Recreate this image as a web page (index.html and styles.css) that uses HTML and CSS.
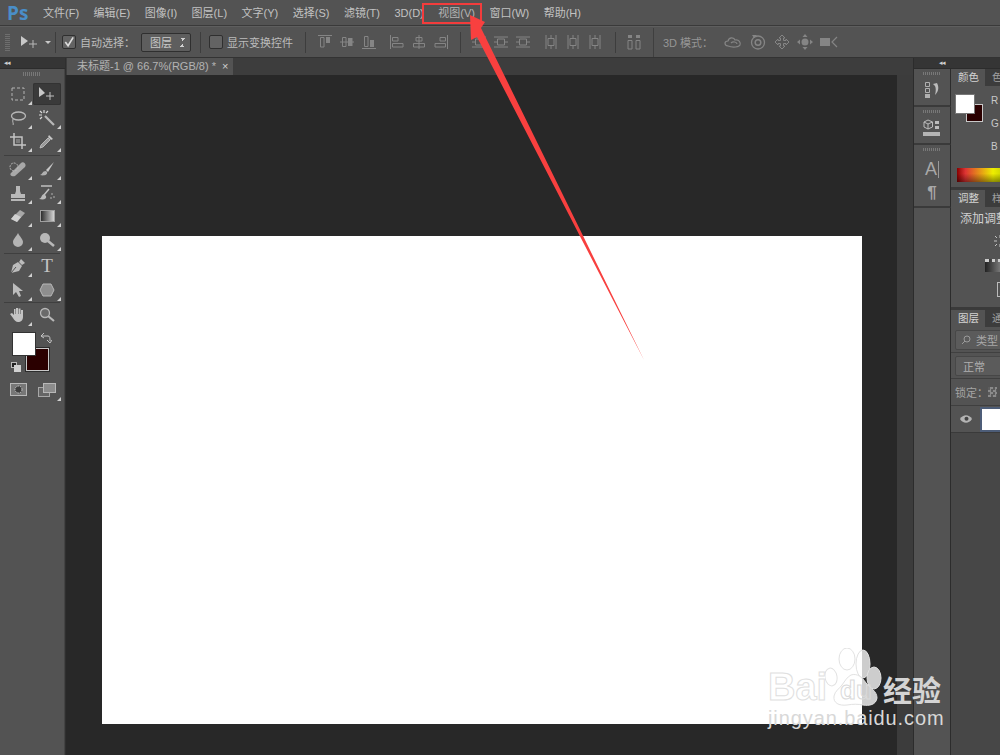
FILE: index.html
```html
<!DOCTYPE html>
<html lang="zh-CN">

<head>
    <meta charset="UTF-8">
    <title>Photoshop</title>
    <link rel="stylesheet" href="styles.css">
</head>

<body>
    <svg class="defs" width="0" height="0">
        <symbol id="corner" viewBox="0 0 4 4"><path d="M4 0V4H0Z" fill="#d0d0d0"/></symbol>
        <symbol id="alignv" viewBox="0 0 16 16"><path d="M1 1.500H15M3.500 3.500H7V13H3.500Z" fill="none" stroke="#858585"/><path d="M9 3H13V9H9Z" fill="#858585"/></symbol>
        <symbol id="alignm" viewBox="0 0 16 16"><path d="M1 8H15M3.500 3.500H7V12.500H3.500Z" fill="none" stroke="#858585"/><path d="M9 4H13.500V12H9Z" fill="#858585"/></symbol>
        <symbol id="alignb" viewBox="0 0 16 16"><path d="M1 14.500H15M3.500 2.500H7V12.500H3.500Z" fill="none" stroke="#858585"/><path d="M9 6H13V13H9Z" fill="#858585"/></symbol>
        <symbol id="alignl" viewBox="0 0 16 16"><path d="M1.500 1V15M3.500 3.500H9V7H3.500ZM3.500 9.500H14V13H3.500Z" fill="none" stroke="#858585"/></symbol>
        <symbol id="alignc" viewBox="0 0 16 16"><path d="M8 1V15M5 3.500H11V7H5ZM2.500 9.500H13.500V13H2.500Z" fill="none" stroke="#858585"/></symbol>
        <symbol id="alignr" viewBox="0 0 16 16"><path d="M14.500 1V15M7 3.500H12.500V7H7ZM2 9.500H12.500V13H2Z" fill="none" stroke="#858585"/></symbol>
        <symbol id="disth" viewBox="0 0 16 16"><path d="M1 3H15M1 8H15M1 13H15" stroke="#858585"/><path d="M4.500 5H11.500V11H4.500Z" fill="#535353" stroke="#858585"/></symbol>
        <symbol id="distv" viewBox="0 0 16 16"><path d="M3 1V15M8 1V15M13 1V15" stroke="#858585"/><path d="M5 4.500H11V11.500H5Z" fill="#535353" stroke="#858585"/></symbol>
        <symbol id="autoalign" viewBox="0 0 16 16"><path d="M2 6.500H6V15H2ZM10 6.500H14V15H10Z" fill="none" stroke="#858585"/><path d="M2 1H6V4H2ZM10 1H14V4H10Z" fill="#858585"/></symbol>
        <linearGradient id="pawfill" gradientUnits="userSpaceOnUse" x1="0" y1="0" x2="60" y2="0">
            <stop offset="0.617" stop-color="#fff"/>
            <stop offset="0.617" stop-color="#cdcdcd"/>
        </linearGradient>
    </svg>

    <div class="app">
        <header class="menubar">
            <span class="ps-logo">Ps</span>
            <nav class="menu">
                <a>文件(F)</a>
                <a>编辑(E)</a>
                <a>图像(I)</a>
                <a>图层(L)</a>
                <a>文字(Y)</a>
                <a>选择(S)</a>
                <a>滤镜(T)</a>
                <a>3D(D)</a>
                <a class="open">视图(V)</a>
                <a>窗口(W)</a>
                <a>帮助(H)</a>
            </nav>
        </header>

        <div class="options">
            <div class="grip-v"></div>
            <div class="opt-tool">
                <svg width="20" height="14" viewBox="0 0 20 14"><path d="M1 1L8 6L1 11Z" fill="#c8c8c8"/><path d="M13 5V13M9 9H17" stroke="#b8b8b8"/></svg>
                <i class="caret"></i>
            </div>
            <div class="opt-sep"></div>
            <label class="check on">
                <svg width="13" height="13" viewBox="0 0 13 13"><path d="M2.500 6L5.500 10L11 1" fill="none" stroke="#dcdcdc" stroke-width="1.800"/></svg>
            </label>
            <span class="opt-text">自动选择：</span>
            <div class="select">图层<i class="updown"></i></div>
            <div class="opt-sep s1"></div>
            <label class="check"></label>
            <span class="opt-text">显示变换控件</span>
            <div class="opt-sep s2"></div>
            <div class="align-group">
                <svg><use href="#alignv"/></svg>
                <svg><use href="#alignm"/></svg>
                <svg><use href="#alignb"/></svg>
                <svg class="gap"><use href="#alignl"/></svg>
                <svg><use href="#alignc"/></svg>
                <svg><use href="#alignr"/></svg>
            </div>
            <div class="opt-sep s3"></div>
            <div class="align-group">
                <svg><use href="#disth"/></svg>
                <svg><use href="#disth"/></svg>
                <svg><use href="#disth"/></svg>
                <svg class="gap"><use href="#distv"/></svg>
                <svg><use href="#distv"/></svg>
                <svg><use href="#distv"/></svg>
            </div>
            <div class="opt-sep s4"></div>
            <svg class="auto" width="16" height="16"><use href="#autoalign"/></svg>
            <div class="opt-sep s5"></div>
            <span class="opt-text mode">3D 模式：</span>
            <div class="mode-icons">
                <svg width="18" height="14" viewBox="0 0 18 14"><path d="M4 11C0 10 0 6 4 6C5 2 10 2 11 5C15 4 17 8 16 10C15 12 9 13 4 11Z M7 8C9 6 13 7 13 9" fill="none" stroke="#858585" stroke-width="1.200"/></svg>
                <svg width="18" height="16" viewBox="0 0 18 16"><circle cx="9" cy="8.500" r="6.500" fill="none" stroke="#858585" stroke-width="1.300"/><circle cx="9" cy="8.500" r="2.800" fill="none" stroke="#858585" stroke-width="1.500"/><path d="M3 1L8 1L5 4Z" fill="#858585"/></svg>
                <svg width="16" height="16" viewBox="0 0 16 16"><path d="M8 1L11 4H9.500V6.500H12V5L15 8L12 11V9.500H9.500V12H11L8 15L5 12H6.500V9.500H4V11L1 8L4 5V6.500H6.500V4H5Z" fill="none" stroke="#858585"/></svg>
                <svg width="16" height="16" viewBox="0 0 16 16"><path d="M8 0L10.500 3H5.500ZM8 16L5.500 13H10.500ZM0 8L3 5.500V10.500ZM16 8L13 10.500V5.500Z" fill="#858585"/><circle cx="8" cy="8" r="3.500" fill="#858585"/></svg>
                <svg width="18" height="12" viewBox="0 0 18 12"><path d="M0 2H10V10H0Z" fill="#858585"/><path d="M17 1L12 6L17 11" fill="none" stroke="#858585" stroke-width="1.200"/></svg>
            </div>
        </div>

        <div class="workarea">
            <aside class="toolbar">
                <div class="collapse-strip"><span class="collapse">◂◂</span></div>
                <div class="tools">
                    <div class="grip-h"></div>
                    <div class="tool-row">
                        <div class="tool"><svg width="16" height="16" viewBox="0 0 16 16"><rect x="2" y="2" width="12" height="12" fill="none" stroke="#b4b4b4" stroke-dasharray="3 2"/></svg><svg class="more"><use href="#corner"/></svg></div>
                        <div class="tool active"><svg width="18" height="14" viewBox="0 0 18 14"><path d="M1 0L1 10L7 6Z" fill="#c8c8c8"/><path d="M12 5V13M8 9H16" stroke="#c0c0c0"/></svg></div>
                    </div>
                    <div class="tool-row">
                        <div class="tool"><svg width="18" height="16" viewBox="0 0 18 16"><ellipse cx="9.500" cy="6" rx="7" ry="4" fill="none" stroke="#b8b8b8" stroke-width="1.300"/><path d="M4 9C3 12 5 14 4 15" fill="none" stroke="#b8b8b8"/></svg><svg class="more"><use href="#corner"/></svg></div>
                        <div class="tool"><svg width="18" height="18" viewBox="0 0 18 18"><path d="M7 7L16 16" stroke="#b8b8b8" stroke-width="2.200"/><path d="M6 1V4M1 6H4M2 2L4 4M10 2L8 4M2 10L4 8" stroke="#d8d8d8" stroke-width="1.200"/></svg><svg class="more"><use href="#corner"/></svg></div>
                    </div>
                    <div class="tool-row">
                        <div class="tool"><svg width="16" height="16" viewBox="0 0 16 16"><path d="M4 0V12H16M0 4H12V16" fill="none" stroke="#c4c4c4" stroke-width="1.500"/><path d="M6 6H10V10H6Z" fill="#7c7c7c"/></svg><svg class="more"><use href="#corner"/></svg></div>
                        <div class="tool"><svg width="16" height="16" viewBox="0 0 16 16"><path d="M10 2L14 6L12 7L9 4Z" fill="#c8c8c8"/><path d="M9 5L11 7L4 14L1 15L2 12Z" fill="#9a9a9a" stroke="#c8c8c8" stroke-width="0.800"/></svg><svg class="more"><use href="#corner"/></svg></div>
                    </div>
                    <div class="tool-sep"></div>
                    <div class="tool-row">
                        <div class="tool"><svg width="18" height="16" viewBox="0 0 18 16"><path d="M2 12L12 2C14 0 18 3 16 6L6 15C3 16 0 14 2 12Z" fill="#a8a8a8"/><circle cx="5" cy="6" r="4" fill="none" stroke="#b8b8b8" stroke-dasharray="2 1"/></svg><svg class="more"><use href="#corner"/></svg></div>
                        <div class="tool"><svg width="16" height="16" viewBox="0 0 16 16"><path d="M15 1L7 9L9 11Z" fill="#c8c8c8"/><path d="M7 10C3 10 4 13 1 14C5 15 9 14 8 11Z" fill="#b0b0b0"/></svg><svg class="more"><use href="#corner"/></svg></div>
                    </div>
                    <div class="tool-row">
                        <div class="tool"><svg width="16" height="16" viewBox="0 0 16 16"><path d="M6 1H10V6L11 9H15V13H1V9H5L6 6ZM1 14H15V16H1Z" fill="#b8b8b8"/></svg><svg class="more"><use href="#corner"/></svg></div>
                        <div class="tool"><svg width="18" height="16" viewBox="0 0 18 16"><path d="M3 1H14M11 4L6 10" stroke="#c0c0c0" stroke-width="1.500"/><path d="M6 9C3 10 4 13 1 14C6 15 9 14 8 11Z" fill="#bbb"/><path d="M14 8V10M16 11V13M13 12V14" stroke="#b0b0b0"/></svg><svg class="more"><use href="#corner"/></svg></div>
                    </div>
                    <div class="tool-row">
                        <div class="tool"><svg width="16" height="14" viewBox="0 0 16 14"><path d="M10 1L15 4L7 13L1 10Z" fill="#a8a8a8"/><path d="M5 5L11 8L7 13L1 10Z" fill="#d0d0d0"/></svg><svg class="more"><use href="#corner"/></svg></div>
                        <div class="tool"><div class="gradient"></div><svg class="more"><use href="#corner"/></svg></div>
                    </div>
                    <div class="tool-row">
                        <div class="tool"><svg width="12" height="14" viewBox="0 0 12 14"><path d="M6 0C8 4 11 6 11 9A5 5 0 0 1 1 9C1 6 4 4 6 0Z" fill="#b4b4b4"/></svg><svg class="more"><use href="#corner"/></svg></div>
                        <div class="tool"><svg width="16" height="16" viewBox="0 0 16 16"><circle cx="6" cy="6" r="5" fill="#b8b8b8"/><path d="M9 9L15 14" stroke="#b8b8b8" stroke-width="2.500"/></svg><svg class="more"><use href="#corner"/></svg></div>
                    </div>
                    <div class="tool-sep thin"></div>
                    <div class="tool-row">
                        <div class="tool"><svg width="16" height="16" viewBox="0 0 16 16"><path d="M11 1L15 5L12 7L9 4ZM8 4L12 8L9 13L1 15L3 7Z" fill="#bcbcbc"/><path d="M1 15L6 9" stroke="#535353"/></svg><svg class="more"><use href="#corner"/></svg></div>
                        <div class="tool"><span class="tool-t">T</span></div>
                    </div>
                    <div class="tool-row">
                        <div class="tool"><svg width="12" height="16" viewBox="0 0 12 16"><path d="M1 1V13L4 10L7 15L9 14L7 9H11Z" fill="#bcbcbc"/></svg><svg class="more"><use href="#corner"/></svg></div>
                        <div class="tool"><svg width="16" height="14" viewBox="0 0 16 14"><path d="M4 1H12L15 7L12 13H4L1 7Z" fill="#8e8e8e" stroke="#b8b8b8"/></svg><svg class="more"><use href="#corner"/></svg></div>
                    </div>
                    <div class="tool-sep thin"></div>
                    <div class="tool-row">
                        <div class="tool"><svg width="16" height="16" viewBox="0 0 16 16"><path d="M3 11L0 7L2 6L4 8V2H5.500V7H6V1H8V7H8.500V1.500H10.500V7H11V3H13V10C13 13 11 15 8 15C6 15 4 13 3 11Z" fill="#c4c4c4"/></svg><svg class="more"><use href="#corner"/></svg></div>
                        <div class="tool"><svg width="16" height="16" viewBox="0 0 16 16"><circle cx="6" cy="6" r="4.500" fill="#6a6a6a" stroke="#b8b8b8" stroke-width="1.300"/><path d="M9 9L15 14" stroke="#b8b8b8" stroke-width="2.200"/></svg></div>
                    </div>
                    <div class="swatches">
                        <div class="swatch-bg"></div>
                        <div class="swatch-fg"></div>
                        <svg class="swap" width="12" height="12" viewBox="0 0 12 12"><path d="M1 4H8C10 4 10 6 10 9M1 4L4 1M1 4L4 6M10 11L7 8M10 11L12 8" fill="none" stroke="#c4c4c4"/></svg>
                        <div class="mini-a"></div>
                        <div class="mini-b"></div>
                    </div>
                    <div class="tool-row last">
                        <div class="tool"><svg width="17" height="13" viewBox="0 0 17 13"><rect x="0.500" y="0.500" width="16" height="12" fill="#777" stroke="#b8b8b8"/><circle cx="8.500" cy="6.500" r="3.500" fill="#3e3e3e" stroke="#ccc" stroke-dasharray="1.500 1"/></svg></div>
                        <div class="tool"><svg width="18" height="14" viewBox="0 0 18 14"><rect x="0.500" y="4.500" width="11" height="9" fill="#666" stroke="#a8a8a8"/><rect x="5.500" y="0.500" width="12" height="9" fill="#8c8c8c" stroke="#b8b8b8"/></svg><svg class="more"><use href="#corner"/></svg></div>
                    </div>
                </div>
            </aside>

            <main class="center">
                <div class="tabbar">
                    <div class="doc-tab">未标题-1 @ 66.7%(RGB/8) *<span class="close">×</span></div>
                </div>
                <div class="viewport">
                    <div class="canvas-area">
                        <div class="paper"></div>
                    </div>
                    <div class="gutter"></div>
                </div>
            </main>

            <aside class="dock">
                <div class="collapse-strip right"><span class="collapse">◂◂</span></div>
                <div class="dock-group g1">
                    <div class="grip-h small"></div>
                    <svg width="16" height="18" viewBox="0 0 16 18"><path d="M1.500 1.500H5.500V5.500H1.500ZM1.500 7.500H5.500V11.500H1.500Z" fill="none" stroke="#b0b0b0"/><path d="M1 13H6V17H1Z" fill="#b0b0b0"/><path d="M9 3L13 2C15 6 15 10 11 14C12 10 12 7 11 5Z" fill="#bcbcbc"/></svg>
                </div>
                <div class="dock-group g2">
                    <div class="grip-h small"></div>
                    <svg width="18" height="18" viewBox="0 0 18 18"><path d="M5 1L9.500 3V8L5 10L1 8V3Z" fill="none" stroke="#bcbcbc"/><path d="M1 3L5 5L9.500 3M5 5V10" fill="none" stroke="#bcbcbc"/><path d="M12 2H16V5H12ZM12 7H16V10H12Z" fill="#bcbcbc"/><path d="M0 13H17V17H0Z" fill="#b4b4b4"/></svg>
                </div>
                <div class="dock-group g3">
                    <div class="grip-h small"></div>
                    <span class="dock-a">A<b></b></span>
                    <span class="dock-p">¶</span>
                </div>
                <div class="dock-group rest"></div>
            </aside>

            <aside class="panels">
                <div class="collapse-strip"></div>
                <section class="panel p-color">
                    <div class="panel-tabs"><span class="ptab on">颜色</span><span class="ptab">色</span></div>
                    <div class="color-body">
                        <div class="c-swatch-bg"></div>
                        <div class="c-swatch-fg"></div>
                        <span class="c-label r">R</span>
                        <span class="c-label g">G</span>
                        <span class="c-label b">B</span>
                        <div class="spectrum"></div>
                    </div>
                </section>
                <section class="panel p-adjust">
                    <div class="panel-tabs"><span class="ptab on">调整</span><span class="ptab">样</span></div>
                    <div class="adjust-title">添加调整</div>
                    <svg class="adj-sun" width="8" height="14" viewBox="0 0 8 14"><path d="M7 1V4M7 10V13M1 7H4M2 2L4 4M2 12L4 10" stroke="#c4c4c4"/></svg>
                    <div class="adj-levels"></div>
                    <div class="adj-box"></div>
                </section>
                <section class="panel p-layers">
                    <div class="panel-tabs"><span class="ptab on">图层</span><span class="ptab">通</span></div>
                    <div class="layer-row filter">
                        <div class="field"><svg width="10" height="10" viewBox="0 0 10 10"><circle cx="6" cy="4" r="3" fill="none" stroke="#9a9a9a"/><path d="M4 6L1 9" stroke="#9a9a9a"/></svg>类型</div>
                    </div>
                    <div class="layer-row blend">
                        <div class="field">正常</div>
                    </div>
                    <div class="layer-row lock">
                        <span>锁定：</span><i class="checker"></i>
                    </div>
                    <div class="layer-item">
                        <svg width="12" height="8" viewBox="0 0 12 8"><path d="M0 4C3 -1 9 -1 12 4C9 9 3 9 0 4Z" fill="#b4b4b4"/><circle cx="6.500" cy="3.800" r="2" fill="#444"/></svg>
                        <div class="thumb"></div>
                    </div>
                    <div class="layer-empty"></div>
                </section>
            </aside>
        </div>

        <!-- annotation added over the screenshot -->
        <div class="callout"></div>
        <svg class="arrow" width="1000" height="755" viewBox="0 0 1000 755"><path d="M470 15L485 22L481 28L644 360L477 37L471 40Z" fill="#f8403f"/></svg>

        <div class="watermark">
            <svg class="paw" width="60" height="60" viewBox="0 0 60 60">
                <g fill="url(#pawfill)" stroke="#e2e2e2">
                    <ellipse cx="6" cy="29" rx="6" ry="9" transform="rotate(-10 6 29)"/>
                    <ellipse cx="22" cy="11" rx="8" ry="11"/>
                    <ellipse cx="38" cy="16" rx="7" ry="14"/>
                    <ellipse cx="49" cy="30" rx="7" ry="11"/>
                    <path d="M26 27C32 25 37 29 41 35C45 40 52 43 52 50C51 57 44 58 38 57C33 56 28 56 22 57C14 58 8 55 9 48C10 43 14 41 17 37C20 33 22 29 26 27Z"/>
                </g>
            </svg>
            <span class="wm-bai">Bai</span>
            <span class="wm-du">du</span>
            <span class="wm-jy">经验</span>
            <span class="wm-url">jingyan.baidu.com</span>
        </div>
    </div>
</body>

</html>
```
FILE: styles.css
```css
:root {
    --panel: #535353;
    --panel-dark: #474747;
    --line: #2f2f2f;
    --text: #c2c2c2;
    --font: "Liberation Sans", "Noto Sans CJK SC", sans-serif;
}

* {
    box-sizing: border-box;
}

body {
    margin: 0;
    background: var(--panel);
    font-family: var(--font);
    font-size: 11px;
    color: var(--text);
    overflow: hidden;
}

.defs {
    position: absolute;
}

.app {
    position: relative;
    width: 1000px;
    height: 755px;
    display: flex;
    flex-direction: column;
    overflow: hidden;
}

/* menu */
.menubar {
    height: 26px;
    display: flex;
    align-items: center;
    border-bottom: 1px solid #3a3a3a;
    background: #535353;
}

.ps-logo {
    width: 43px;
    padding-left: 7px;
    font: bold 19px "Open Sans", sans-serif;
    color: #4a8ec8;
}

.menu {
    display: flex;
    gap: 14.500px;
}

.menu a {
    line-height: 20px;
    white-space: nowrap;
}

.menu a.open {
    color: #b4b4b4;
}

/* options bar */
.options {
    height: 32px;
    display: flex;
    align-items: center;
    background: #535353;
    border-top: 1px solid #5e5e5e;
    border-bottom: 1px solid #333;
    color: #bcbcbc;
}

.grip-v {
    width: 5px;
    height: 17px;
    margin-left: 5px;
    background: repeating-linear-gradient(#6e6e6e 0 1px, transparent 1px 2px);
}

.opt-tool {
    display: flex;
    align-items: center;
    margin-left: 10px;
    width: 35px;
}

.caret {
    margin-left: 5px;
    border-left: 3px solid transparent;
    border-right: 3px solid transparent;
    border-top: 3px solid #c8c8c8;
}

.opt-sep {
    width: 1px;
    height: 21px;
    margin: 0 6px 0 0;
    background: #3d3d3d;
    flex: none;
}

.check {
    width: 14px;
    height: 14px;
    margin-right: 4px;
    border: 1px solid #2f2f2f;
    border-radius: 2px;
    background: #636363;
    display: flex;
    align-items: center;
    justify-content: center;
}

.opt-text {
    white-space: nowrap;
}

.select {
    width: 50px;
    height: 19px;
    margin-left: 6px;
    padding-left: 8px;
    display: flex;
    align-items: center;
    justify-content: space-between;
    border: 1px solid #2f2f2f;
    border-radius: 2px;
    background: #5e5e5e;
    color: #c8c8c8;
}

.updown {
    width: 5px;
    height: 9px;
    margin-right: 5px;
    background:
        linear-gradient(to top right, transparent 50%, #d0d0d0 50%) 0 0 / 3px 3px no-repeat,
        linear-gradient(to top left, transparent 50%, #d0d0d0 50%) 100% 0 / 3px 3px no-repeat,
        linear-gradient(to bottom right, transparent 50%, #d0d0d0 50%) 0 100% / 3px 3px no-repeat,
        linear-gradient(to bottom left, transparent 50%, #d0d0d0 50%) 100% 100% / 3px 3px no-repeat;
}

.s1 {
    margin: 0 8px 0 9px;
}

.s2 {
    margin: 0 11px 0 12px;
}

.s3 {
    margin: 0 10px 0 11px;
}

.s4 {
    margin: 0 10px 0 12px;
}

.s5 {
    margin: 0 0 0 11px;
    height: 29px;
    background: #3f3f3f;
}

.align-group {
    display: flex;
    gap: 6px;
}

.align-group svg {
    width: 16px;
    height: 16px;
}

.align-group .gap {
    margin-left: 6px;
}

.mode {
    margin-left: 9px;
    color: #969696;
}

.mode-icons {
    display: flex;
    align-items: center;
    gap: 7px;
    margin-left: 11px;
}

/* main area */
.workarea {
    flex: 1;
    display: flex;
    min-height: 0;
}

.collapse-strip {
    height: 11px;
    background: #353535;
    border-bottom: 1px solid #2c2c2c;
    flex: none;
}

.collapse {
    display: block;
    font-size: 7px;
    line-height: 10px;
    padding-left: 4px;
    letter-spacing: -1px;
    color: #d0d0d0;
}

.toolbar {
    width: 66px;
    flex: none;
    display: flex;
    flex-direction: column;
    border-right: 1px solid #2f2f2f;
    background: var(--panel);
}

.tools {
    flex: 1;
    border-right: 1px solid #444;
    padding-top: 3px;
}

.grip-h {
    width: 18px;
    height: 4px;
    margin: 0 auto 7px;
    background: repeating-linear-gradient(90deg, #787878 0 1px, transparent 1px 2px);
}

.tool-row {
    display: grid;
    grid-template-columns: 28px 28px;
    gap: 0 1px;
    padding-left: 4px;
    height: 23.700px;
}

.tool {
    position: relative;
    height: 22px;
    display: flex;
    align-items: center;
    justify-content: center;
}

.tool.active {
    background: #3a3a3a;
    border-radius: 2px;
    box-shadow: inset 0 0 0 1px #333;
}

.more {
    position: absolute;
    right: 0;
    bottom: 0;
    width: 4px;
    height: 4px;
}

.tool-sep {
    height: 1px;
    margin: 1px 4px 2px;
    background: #3f3f3f;
}

.tool-sep.thin {
    margin: 0 4px 1px;
}

.gradient {
    width: 15px;
    height: 12px;
    border: 1px solid #a0a0a0;
    background: linear-gradient(90deg, #2e2e2e, #d4d4d4);
}

.tool-t {
    font: 19px "Liberation Serif", serif;
    color: #c4c4c4;
}

.swatches {
    position: relative;
    height: 49px;
    margin-top: -1px;
}

.swatch-bg {
    position: absolute;
    left: 26px;
    top: 21px;
    width: 23px;
    height: 23px;
    background: #2a0000;
    border: 1px solid #c8c8c8;
    box-shadow: 0 0 0 1px #2c2c2c;
}

.swatch-fg {
    position: absolute;
    left: 13px;
    top: 6px;
    width: 22px;
    height: 22px;
    background: #fff;
    box-shadow: 0 0 0 1px #333;
}

.swap {
    position: absolute;
    left: 40px;
    top: 5px;
}

.mini-a {
    position: absolute;
    left: 11px;
    top: 35px;
    width: 6px;
    height: 6px;
    background: #222;
    border: 1px solid #bbb;
}

.mini-b {
    position: absolute;
    left: 14px;
    top: 38px;
    width: 7px;
    height: 7px;
    background: #d0d0d0;
}

.tool-row.last {
    margin-top: 3px;
}

/* document */
.center {
    flex: 1;
    display: flex;
    flex-direction: column;
    min-width: 0;
}

.tabbar {
    height: 17px;
    flex: none;
    background: #3d3d3d;
    padding-left: 1px;
}

.doc-tab {
    width: 166px;
    height: 17px;
    background: #535353;
    padding-left: 10px;
    line-height: 17px;
    font-size: 11px;
    color: #b4b4b4;
    white-space: nowrap;
}

.close {
    margin-left: 6px;
    color: #d0d0d0;
}

.viewport {
    flex: 1;
    display: flex;
    min-height: 0;
}

.canvas-area {
    flex: 1;
    background: #282828;
    padding: 161px 0 0 36px;
}

.paper {
    width: 760px;
    height: 488px;
    background: #fff;
}

.gutter {
    width: 16px;
    background: #3c3c3c;
}

/* icon dock */
.dock {
    width: 38px;
    flex: none;
    display: flex;
    flex-direction: column;
    border-left: 1px solid #2c2c2c;
    background: var(--panel);
}

.collapse-strip.right {
    text-align: right;
}

.collapse-strip.right .collapse {
    padding: 0 6px 0 0;
}

.dock-group {
    display: flex;
    flex-direction: column;
    align-items: center;
    gap: 6px;
    padding-top: 3px;
    border-bottom: 2px solid #3a3a3a;
    border-right: 1px solid #2c2c2c;
}

.dock-group .grip-h.small {
    margin: 0 auto;
    height: 3px;
    flex: none;
}

.g1 {
    height: 38px;
}

.g2 {
    height: 38px;
}

.g3 {
    height: 63px;
}

.rest {
    flex: 1;
    border-bottom: 0;
}

.dock-a {
    font: 18px "Liberation Sans", sans-serif;
    color: #a8a8a8;
    line-height: 20px;
    margin-top: 2px;
    display: flex;
    align-items: center;
}

.dock-a b {
    display: block;
    width: 1px;
    height: 17px;
    margin-left: 1px;
    background: #999;
}

.dock-p {
    font: bold 17px "Liberation Sans", sans-serif;
    color: #a8a8a8;
    line-height: 16px;
}

/* panels */
.panels {
    width: 49px;
    flex: none;
    display: flex;
    flex-direction: column;
    background: #3a3a3a;
    overflow: hidden;
}

.panel {
    width: 120px;
    background: #535353;
    margin-bottom: 3px;
    flex: none;
    position: relative;
    overflow: hidden;
}

.panel-tabs {
    display: flex;
    height: 17px;
    background: #3c3c3c;
}

.ptab {
    padding: 0 7px;
    line-height: 16px;
    font-size: 10.500px;
    color: #a0a0a0;
    white-space: nowrap;
}

.ptab.on {
    width: 34px;
    flex: none;
    background: #535353;
    color: #d4d4d4;
}

.p-color {
    height: 118px;
}

.color-body {
    position: relative;
    height: 101px;
}

.c-swatch-bg {
    position: absolute;
    left: 15px;
    top: 18px;
    width: 17px;
    height: 18px;
    background: #2a0000;
    border: 1px solid #c8c8c8;
}

.c-swatch-fg {
    position: absolute;
    left: 5px;
    top: 9px;
    width: 18px;
    height: 18px;
    background: #fff;
    box-shadow: 0 0 0 1px #777;
}

.c-label {
    position: absolute;
    left: 40px;
    font-size: 10px;
    color: #c8c8c8;
}

.r { top: 9px; }
.g { top: 32px; }
.b { top: 55px; }

.spectrum {
    position: absolute;
    left: 6px;
    width: 60px;
    top: 82px;
    height: 14px;
    background:
        linear-gradient(#0000 40%, #0006),
        linear-gradient(90deg, #800 0, #d33 14%, #ee0 60%, #9a0 100%);
}

.p-adjust {
    height: 117px;
}

.adjust-title {
    padding: 2px 0 0 9px;
    font-size: 12px;
    color: #d0d0d0;
    white-space: nowrap;
}

.adj-sun {
    position: absolute;
    left: 42px;
    top: 44px;
}

.adj-levels {
    position: absolute;
    left: 34px;
    width: 30px;
    top: 69px;
    height: 13px;
    background: linear-gradient(90deg, #222, #ccc);
    border-top: 3px dotted #ccc;
}

.adj-box {
    position: absolute;
    left: 46px;
    width: 12px;
    top: 92px;
    height: 15px;
    border: 1px solid #bbb;
}

.p-layers {
    flex: 1;
    margin: 0;
}

.layer-row {
    padding: 0 0 0 4px;
    display: flex;
    align-items: center;
    border-bottom: 1px solid #3f3f3f;
}

.filter {
    height: 26px;
    border-bottom-color: #404040;
}

.blend {
    height: 26px;
}

.field {
    width: 70px;
    height: 20px;
    flex: none;
    display: flex;
    align-items: center;
    gap: 5px;
    padding-left: 5px;
    border: 1px solid #474747;
    border-radius: 2px;
    background: #5b5b5b;
    color: #a8a8a8;
    white-space: nowrap;
}

.blend .field {
    padding-left: 7px;
    color: #b0b0b0;
}

.lock {
    height: 27px;
    gap: 0;
    color: #a4a4a4;
    white-space: nowrap;
}

.checker {
    width: 9px;
    height: 10px;
    flex: none;
    background: repeating-conic-gradient(#8a8a8a 0 25%, #5c5c5c 0 50%) 0 0 / 5px 5px;
}

.layer-item {
    height: 27px;
    display: flex;
    align-items: center;
    padding-left: 9px;
    background: #535353;
    border-bottom: 1px solid #3a3a3a;
}

.thumb {
    flex: none;
    width: 26px;
    height: 25px;
    margin-left: 8px;
    background: #fff;
    border: 2px solid #4d5d78;
}

.layer-empty {
    height: 100%;
    background: #474747;
}

/* annotation */
.callout {
    position: absolute;
    left: 422px;
    top: 3px;
    width: 60px;
    height: 21px;
    border: 2px solid #f33c3c;
}

.arrow {
    position: absolute;
    left: 0;
    top: 0;
    pointer-events: none;
}

/* watermark */
.watermark {
    position: absolute;
    left: 765px;
    top: 648px;
    width: 190px;
    height: 90px;
}

.watermark span {
    position: absolute;
    white-space: nowrap;
    line-height: 1;
}

.paw {
    position: absolute;
    left: 60px;
    top: 0;
}

.wm-bai {
    left: 3px;
    top: 20px;
    font: bold 38px "Liberation Sans", sans-serif;
    color: #fff;
    -webkit-text-stroke: 1px #e0e0e0;
}

.wm-du {
    left: 75px;
    top: 29px;
    font: bold 26px "Liberation Sans", sans-serif;
    color: transparent;
    -webkit-text-stroke: 1px #dadada;
}

.wm-jy {
    left: 118px;
    top: 27px;
    font: bold 29px "Noto Sans CJK SC", sans-serif;
    letter-spacing: 0;
    color: #d4d4d4;
}

.wm-url {
    left: 3px;
    top: 60px;
    font: 20px "Liberation Sans", sans-serif;
    color: #d8d8d8;
    letter-spacing: 0.900px;
}
```
